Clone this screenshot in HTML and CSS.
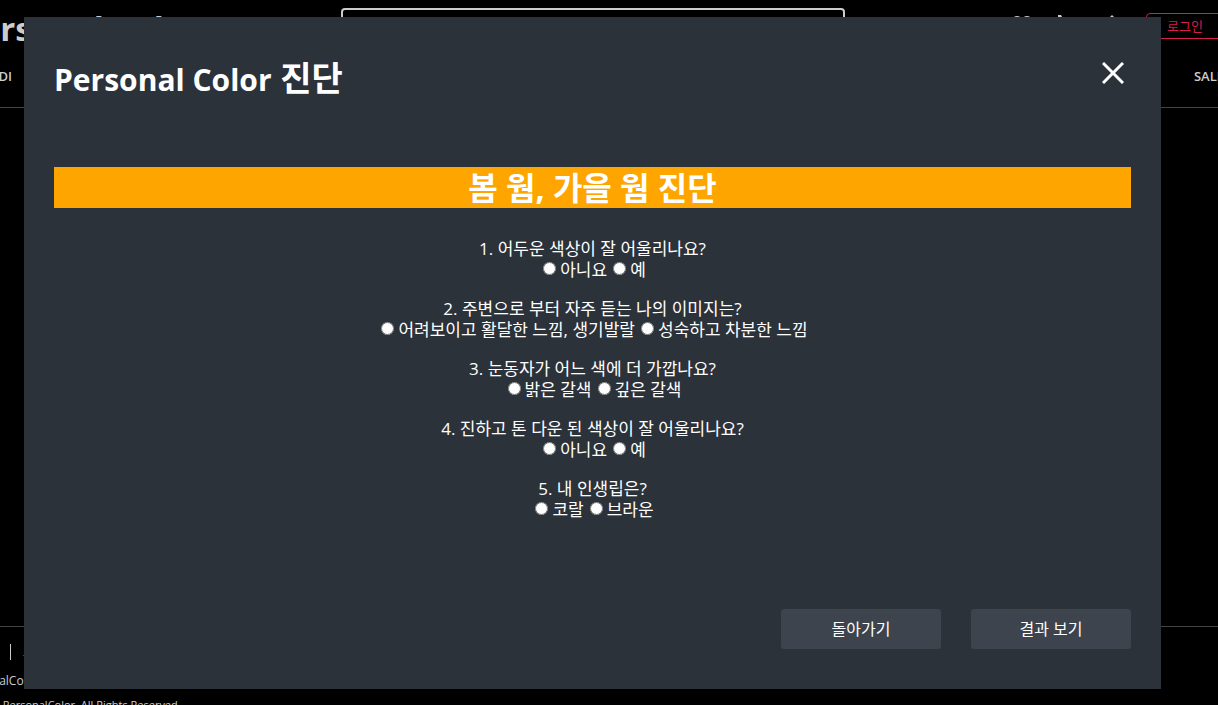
FILE: index.html
```html
<!DOCTYPE html>
<html lang="ko">
<head>
<meta charset="utf-8">
<title>Personal Color 진단</title>
<link rel="stylesheet" href="styles.css">
</head>
<body>
<div class="page">
  <header class="header">
    <div class="topbar">
      <a class="brand" href="#">Personal Color</a>
      <input class="search" type="search" aria-label="검색">
      <div class="tools">
        <svg class="tool" viewBox="0 0 20 20"><path d="M10 18 2 9C0 4 2 2 5 2c2 0 4 1 5 3 1-2 3-3 5-3 3 0 5 2 3 7z"/></svg>
        <svg class="tool" viewBox="0 0 20 20"><path d="M0 1h3l1 2 6 4v10H0z"/></svg>
        <svg class="tool" viewBox="0 0 20 20"><path d="M8 1l8 8v9H0V9z"/></svg>
      </div>
      <button class="login" type="button">로그인</button>
    </div>
    <nav class="nav"><a href="#">CODI</a><a href="#">SALE</a></nav>
  </header>
  <main class="content"></main>
  <footer class="footer">
    <div class="links"><span class="divider"></span><a href="#">고객센터</a></div>
    <p class="company">PersonalColor</p>
    <p class="copyright">ⓒ PersonalColor. All Rights Reserved.</p>
  </footer>
</div>

<div class="modal" role="dialog" aria-labelledby="title">
  <div class="modal-head">
    <h1 id="title" class="title"><span class="latin">Personal Color</span> 진단</h1>
    <button class="close" type="button" aria-label="닫기"><svg viewBox="0 0 22 22"><path d="M1 1 21 21M21 1 1 21"/></svg></button>
  </div>
  <form class="quiz">
    <h2 class="banner">봄 웜, 가을 웜 진단</h2>
    <div class="questions">
      <fieldset class="question"><legend>1. 어두운 색상이 잘 어울리나요?</legend>
        <div class="answers"><label><input type="radio" name="q1">아니요</label><label><input type="radio" name="q1">예</label></div></fieldset>
      <fieldset class="question"><legend>2. 주변으로 부터 자주 듣는 나의 이미지는?</legend>
        <div class="answers"><label><input type="radio" name="q2">어려보이고 활달한 느낌, 생기발랄</label><label><input type="radio" name="q2">성숙하고 차분한 느낌</label></div></fieldset>
      <fieldset class="question"><legend>3. 눈동자가 어느 색에 더 가깝나요?</legend>
        <div class="answers"><label><input type="radio" name="q3">밝은 갈색</label><label><input type="radio" name="q3">깊은 갈색</label></div></fieldset>
      <fieldset class="question"><legend>4. 진하고 톤 다운 된 색상이 잘 어울리나요?</legend>
        <div class="answers"><label><input type="radio" name="q4">아니요</label><label><input type="radio" name="q4">예</label></div></fieldset>
      <fieldset class="question"><legend>5. 내 인생립은?</legend>
        <div class="answers"><label><input type="radio" name="q5">코랄</label><label><input type="radio" name="q5">브라운</label></div></fieldset>
    </div>
    <div class="actions">
      <button class="action" type="button">돌아가기</button>
      <button class="action" type="button">결과 보기</button>
    </div>
  </form>
</div>
</body>
</html>
```
FILE: styles.css
```css
* { box-sizing: border-box; }
body {
  margin: 0;
  background: #000;
  color: #fff;
  font-family: "Open Sans", "Noto Sans CJK KR", sans-serif;
  overflow: hidden;
}
button { font-family: inherit; cursor: pointer; }
a { color: inherit; text-decoration: none; }

.page {
  display: flex;
  flex-direction: column;
  height: 100vh;
  margin: 0 -40px;
  color: #ccc;
  overflow: hidden;
}
.header { height: 108px; border-bottom: 1px solid #444; }
.topbar { display: flex; height: 60px; align-items: flex-start; }
.brand { width: 381px; padding-top: 6px; font-size: 33px; line-height: 46px; font-weight: 700; }
.search {
  width: 504px;
  height: 44px;
  margin-top: 8px;
  background: #000;
  border: 2px solid #ccc;
  border-radius: 4px;
}
.tools { display: flex; gap: 26px; padding: 14px 0 0 167px; }
.tool { width: 20px; height: 20px; fill: #ccc; }
.login {
  flex: 1;
  height: 26px;
  margin: 13px 0 0 22px;
  padding: 0 0 0 20px;
  text-align: left;
  font-size: 13px;
  line-height: 22px;
  color: #d81b52;
  background: #000;
  border: 1px solid #d81b52;
  border-radius: 4px;
}
.nav {
  display: flex;
  justify-content: space-between;
  padding: 7px 34px 0 20px;
  font-size: 13px;
  line-height: 18px;
  font-weight: 600;
}
.content { flex: 1; }
.footer { height: 79px; padding: 16px 0 0; border-top: 1px solid #444; font-size: 11px; line-height: 18px; white-space: nowrap; }
.links { display: flex; height: 18px; align-items: center; padding-left: 50px; }
.divider { width: 1px; height: 16px; margin-right: 12px; background: #ccc; }
.company { margin: 11px 0 0; font-size: 12px; }
.copyright { margin: 6px 0 0; padding-left: 29px; }

.modal {
  position: absolute;
  inset: 17px 57px 16px 24px;
  display: flex;
  flex-direction: column;
  padding: 36px 30px 40px;
  background: #2c323a;
}
.modal-head { display: flex; justify-content: space-between; align-items: flex-start; }
.title { margin: 0; padding-top: 3px; font-size: 34px; line-height: 44px; font-weight: 700; }
.latin { font-size: 30px; }
.close { padding: 9px 7px; border: 0; background: none; }
.close svg { display: block; width: 22px; height: 22px; fill: none; stroke: #fff; stroke-width: 3; }
.quiz { display: flex; flex: 1; flex-direction: column; padding-top: 65px; }
.banner {
  margin: 0;
  background: #ffa500;
  text-align: center;
  font-size: 32px;
  line-height: 41px;
  font-weight: 700;
}
.questions {
  display: flex;
  flex: 1;
  flex-direction: column;
  gap: 18px;
  padding-top: 30px;
  font-size: 17px;
  line-height: 21px;
}
.question { margin: 0; padding: 0; border: 0; text-align: center; }
.question legend { width: 100%; padding: 0; }
.answers { display: flex; justify-content: center; gap: 6px; padding-left: 4px; }
.answers label { display: flex; gap: 4px; }
.answers input { width: 13px; height: 13px; margin: 3px 0 0; }
.actions { display: flex; justify-content: flex-end; gap: 30px; }
.action {
  width: 160px;
  height: 40px;
  padding: 0 0 2px;
  font-size: 16px;
  color: #fff;
  background: #3d444d;
  border: 0;
  border-radius: 3px;
}
```
